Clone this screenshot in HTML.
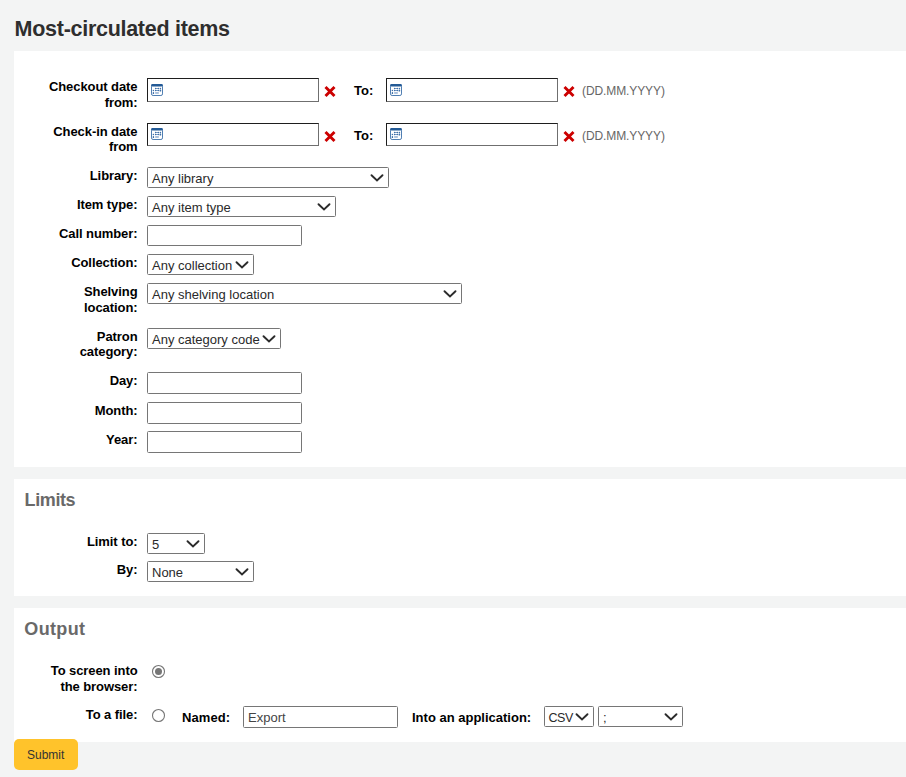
<!DOCTYPE html>
<html><head><meta charset="utf-8"><title>Most-circulated items</title>
<style>
html,body{margin:0;padding:0;}
body{width:906px;height:777px;background:#f3f4f4;position:relative;overflow:hidden;font-family:"Liberation Sans", sans-serif;}
.t{position:absolute;white-space:nowrap;}
.lb{position:absolute;left:0;text-align:right;font-size:13px;font-weight:bold;color:#000;letter-spacing:-0.08px;white-space:nowrap;}
.pan{position:absolute;background:#fff;}
.sel,.tin,.din{position:absolute;box-sizing:border-box;background:#fff;}
.sel,.tin{border:1px solid #767676;border-radius:1.5px;}
.din{border:1px solid;border-color:#1e1e1e #6f6f6f #6f6f6f #1e1e1e;}
.sv{position:absolute;overflow:visible;}
.btn{position:absolute;background:#ffc32b;border-radius:5px;}
</style></head><body>
<div class="pan" style="left:14px;top:51px;width:892px;height:416px;"></div>
<div class="pan" style="left:14px;top:479px;width:892px;height:117px;"></div>
<div class="pan" style="left:14px;top:608px;width:892px;height:134px;"></div>
<div class="t" style="left:14.6px;top:16.4px;font-size:21.5px;font-weight:bold;color:#2e2e2e;line-height:26px;letter-spacing:-0.28px;">Most-circulated items</div>
<div class="lb" style="top:79px;width:137.5px;line-height:16px">Checkout date<br>from:</div>
<div class="din" style="left:147px;top:78px;width:172px;height:24px;"></div>
<svg class="sv" style="left:151px;top:84px" width="12" height="12" viewBox="0 0 12 12">
<rect x="0.5" y="0.6" width="11" height="10.9" rx="1.6" fill="#fff" stroke="#4677ae" stroke-width="0.95"/>
<rect x="0.1" y="0.1" width="11.8" height="2.3" rx="1.3" fill="#235a96"/>
<g fill="#7d9dc6"><rect x="4.6" y="4.1" width="2.8" height="0.9"/><rect x="4.6" y="6" width="2.8" height="0.9"/><rect x="4.2" y="8" width="3.6" height="1.9" fill="#a9bfdb"/></g>
<g fill="#3f70a8"><circle cx="4.6" cy="4.5" r="0.75"/><circle cx="7.4" cy="4.5" r="0.75"/><circle cx="9.4" cy="4.5" r="0.8"/>
<circle cx="2.4" cy="6.4" r="0.75"/><circle cx="4.6" cy="6.4" r="0.75"/><circle cx="7.4" cy="6.4" r="0.75"/><rect x="8.6" y="5.6" width="1.6" height="2.0" rx="0.7"/>
<rect x="1.7" y="8.1" width="1.4" height="2.0" rx="0.6"/></g>
</svg>
<svg class="sv" style="left:324px;top:85px" width="12" height="12" viewBox="0 0 12 12"><path d="M1.5,2 L10.5,11 M10.5,2 L1.5,11" stroke="#cc0000" stroke-width="2.9" stroke-linecap="butt"/></svg>
<div class="t" style="left:354px;top:83px;font-size:13px;font-weight:bold;color:#000;line-height:16px;letter-spacing:0px;">To:</div>
<div class="din" style="left:386px;top:78px;width:172px;height:24px;"></div>
<svg class="sv" style="left:390px;top:84px" width="12" height="12" viewBox="0 0 12 12">
<rect x="0.5" y="0.6" width="11" height="10.9" rx="1.6" fill="#fff" stroke="#4677ae" stroke-width="0.95"/>
<rect x="0.1" y="0.1" width="11.8" height="2.3" rx="1.3" fill="#235a96"/>
<g fill="#7d9dc6"><rect x="4.6" y="4.1" width="2.8" height="0.9"/><rect x="4.6" y="6" width="2.8" height="0.9"/><rect x="4.2" y="8" width="3.6" height="1.9" fill="#a9bfdb"/></g>
<g fill="#3f70a8"><circle cx="4.6" cy="4.5" r="0.75"/><circle cx="7.4" cy="4.5" r="0.75"/><circle cx="9.4" cy="4.5" r="0.8"/>
<circle cx="2.4" cy="6.4" r="0.75"/><circle cx="4.6" cy="6.4" r="0.75"/><circle cx="7.4" cy="6.4" r="0.75"/><rect x="8.6" y="5.6" width="1.6" height="2.0" rx="0.7"/>
<rect x="1.7" y="8.1" width="1.4" height="2.0" rx="0.6"/></g>
</svg>
<svg class="sv" style="left:563px;top:85px" width="12" height="12" viewBox="0 0 12 12"><path d="M1.5,2 L10.5,11 M10.5,2 L1.5,11" stroke="#cc0000" stroke-width="2.9" stroke-linecap="butt"/></svg>
<div class="t" style="left:582px;top:84px;font-size:12px;font-weight:normal;color:#666;line-height:15px;letter-spacing:-0.1px;">(DD.MM.YYYY)</div>
<div class="lb" style="top:124px;width:137.5px;line-height:15px">Check-in date<br>from</div>
<div class="din" style="left:147px;top:123px;width:172px;height:23px;"></div>
<svg class="sv" style="left:151px;top:128px" width="12" height="12" viewBox="0 0 12 12">
<rect x="0.5" y="0.6" width="11" height="10.9" rx="1.6" fill="#fff" stroke="#4677ae" stroke-width="0.95"/>
<rect x="0.1" y="0.1" width="11.8" height="2.3" rx="1.3" fill="#235a96"/>
<g fill="#7d9dc6"><rect x="4.6" y="4.1" width="2.8" height="0.9"/><rect x="4.6" y="6" width="2.8" height="0.9"/><rect x="4.2" y="8" width="3.6" height="1.9" fill="#a9bfdb"/></g>
<g fill="#3f70a8"><circle cx="4.6" cy="4.5" r="0.75"/><circle cx="7.4" cy="4.5" r="0.75"/><circle cx="9.4" cy="4.5" r="0.8"/>
<circle cx="2.4" cy="6.4" r="0.75"/><circle cx="4.6" cy="6.4" r="0.75"/><circle cx="7.4" cy="6.4" r="0.75"/><rect x="8.6" y="5.6" width="1.6" height="2.0" rx="0.7"/>
<rect x="1.7" y="8.1" width="1.4" height="2.0" rx="0.6"/></g>
</svg>
<svg class="sv" style="left:324px;top:130px" width="12" height="12" viewBox="0 0 12 12"><path d="M1.5,2 L10.5,11 M10.5,2 L1.5,11" stroke="#cc0000" stroke-width="2.9" stroke-linecap="butt"/></svg>
<div class="t" style="left:354px;top:128px;font-size:13px;font-weight:bold;color:#000;line-height:16px;letter-spacing:0px;">To:</div>
<div class="din" style="left:386px;top:123px;width:172px;height:23px;"></div>
<svg class="sv" style="left:390px;top:128px" width="12" height="12" viewBox="0 0 12 12">
<rect x="0.5" y="0.6" width="11" height="10.9" rx="1.6" fill="#fff" stroke="#4677ae" stroke-width="0.95"/>
<rect x="0.1" y="0.1" width="11.8" height="2.3" rx="1.3" fill="#235a96"/>
<g fill="#7d9dc6"><rect x="4.6" y="4.1" width="2.8" height="0.9"/><rect x="4.6" y="6" width="2.8" height="0.9"/><rect x="4.2" y="8" width="3.6" height="1.9" fill="#a9bfdb"/></g>
<g fill="#3f70a8"><circle cx="4.6" cy="4.5" r="0.75"/><circle cx="7.4" cy="4.5" r="0.75"/><circle cx="9.4" cy="4.5" r="0.8"/>
<circle cx="2.4" cy="6.4" r="0.75"/><circle cx="4.6" cy="6.4" r="0.75"/><circle cx="7.4" cy="6.4" r="0.75"/><rect x="8.6" y="5.6" width="1.6" height="2.0" rx="0.7"/>
<rect x="1.7" y="8.1" width="1.4" height="2.0" rx="0.6"/></g>
</svg>
<svg class="sv" style="left:563px;top:130px" width="12" height="12" viewBox="0 0 12 12"><path d="M1.5,2 L10.5,11 M10.5,2 L1.5,11" stroke="#cc0000" stroke-width="2.9" stroke-linecap="butt"/></svg>
<div class="t" style="left:582px;top:129px;font-size:12px;font-weight:normal;color:#666;line-height:15px;letter-spacing:-0.1px;">(DD.MM.YYYY)</div>
<div class="lb" style="top:168px;width:137.5px;line-height:16px">Library:</div>
<div class="sel" style="left:147px;top:167px;width:242px;height:21px;"></div>
<div class="t" style="left:152px;top:171px;font-size:13px;font-weight:normal;color:#2a2a2a;line-height:16px;letter-spacing:0px;">Any library</div>
<svg class="sv" style="left:368px;top:167px" width="20" height="21"><polyline points="3.5,8.2 9,13.4 14.5,8.2" fill="none" stroke="#2b2b2b" stroke-width="1.9" stroke-linecap="round" stroke-linejoin="miter"/></svg>
<div class="lb" style="top:197px;width:137.5px;line-height:16px">Item type:</div>
<div class="sel" style="left:147px;top:196px;width:189px;height:21px;"></div>
<div class="t" style="left:152px;top:200px;font-size:13px;font-weight:normal;color:#2a2a2a;line-height:16px;letter-spacing:0px;">Any item type</div>
<svg class="sv" style="left:315px;top:196px" width="20" height="21"><polyline points="3.5,8.2 9,13.4 14.5,8.2" fill="none" stroke="#2b2b2b" stroke-width="1.9" stroke-linecap="round" stroke-linejoin="miter"/></svg>
<div class="lb" style="top:226px;width:137.5px;line-height:16px">Call number:</div>
<div class="tin" style="left:147px;top:225px;width:155px;height:21px;"></div>
<div class="lb" style="top:255px;width:137.5px;line-height:16px">Collection:</div>
<div class="sel" style="left:147px;top:254px;width:107px;height:21px;"></div>
<div class="t" style="left:152px;top:258px;font-size:13px;font-weight:normal;color:#2a2a2a;line-height:16px;letter-spacing:0px;">Any collection</div>
<svg class="sv" style="left:233px;top:254px" width="20" height="21"><polyline points="3.5,8.2 9,13.4 14.5,8.2" fill="none" stroke="#2b2b2b" stroke-width="1.9" stroke-linecap="round" stroke-linejoin="miter"/></svg>
<div class="lb" style="top:284px;width:137.5px;line-height:16px">Shelving<br>location:</div>
<div class="sel" style="left:147px;top:283px;width:315px;height:21px;"></div>
<div class="t" style="left:152px;top:287px;font-size:13px;font-weight:normal;color:#2a2a2a;line-height:16px;letter-spacing:0px;">Any shelving location</div>
<svg class="sv" style="left:441px;top:283px" width="20" height="21"><polyline points="3.5,8.2 9,13.4 14.5,8.2" fill="none" stroke="#2b2b2b" stroke-width="1.9" stroke-linecap="round" stroke-linejoin="miter"/></svg>
<div class="lb" style="top:329px;width:137.5px;line-height:15px">Patron<br>category:</div>
<div class="sel" style="left:147px;top:328px;width:134px;height:21px;"></div>
<div class="t" style="left:152px;top:332px;font-size:13px;font-weight:normal;color:#2a2a2a;line-height:16px;letter-spacing:0px;">Any category code</div>
<svg class="sv" style="left:260px;top:328px" width="20" height="21"><polyline points="3.5,8.2 9,13.4 14.5,8.2" fill="none" stroke="#2b2b2b" stroke-width="1.9" stroke-linecap="round" stroke-linejoin="miter"/></svg>
<div class="lb" style="top:373px;width:137.5px;line-height:16px">Day:</div>
<div class="tin" style="left:147px;top:372px;width:155px;height:22px;"></div>
<div class="lb" style="top:403px;width:137.5px;line-height:16px">Month:</div>
<div class="tin" style="left:147px;top:402px;width:155px;height:22px;"></div>
<div class="lb" style="top:432px;width:137.5px;line-height:16px">Year:</div>
<div class="tin" style="left:147px;top:431px;width:155px;height:22px;"></div>
<div class="t" style="left:24.6px;top:489px;font-size:18px;font-weight:bold;color:#696969;line-height:22px;letter-spacing:-0.4px;">Limits</div>
<div class="lb" style="top:534px;width:137.5px;line-height:16px">Limit to:</div>
<div class="sel" style="left:147px;top:533px;width:58px;height:21px;"></div>
<div class="t" style="left:152px;top:537px;font-size:13px;font-weight:normal;color:#2a2a2a;line-height:16px;letter-spacing:0px;">5</div>
<svg class="sv" style="left:184px;top:533px" width="20" height="21"><polyline points="3.5,8.2 9,13.4 14.5,8.2" fill="none" stroke="#2b2b2b" stroke-width="1.9" stroke-linecap="round" stroke-linejoin="miter"/></svg>
<div class="lb" style="top:562px;width:137.5px;line-height:16px">By:</div>
<div class="sel" style="left:147px;top:561px;width:107px;height:21px;"></div>
<div class="t" style="left:152px;top:565px;font-size:13px;font-weight:normal;color:#2a2a2a;line-height:16px;letter-spacing:0px;">None</div>
<svg class="sv" style="left:233px;top:561px" width="20" height="21"><polyline points="3.5,8.2 9,13.4 14.5,8.2" fill="none" stroke="#2b2b2b" stroke-width="1.9" stroke-linecap="round" stroke-linejoin="miter"/></svg>
<div class="t" style="left:24.3px;top:618px;font-size:18px;font-weight:bold;color:#696969;line-height:22px;letter-spacing:0.35px;">Output</div>
<div class="lb" style="top:663px;width:137.5px;line-height:16px">To screen into<br>the browser:</div>
<svg class="sv" style="left:151.0px;top:664.0px" width="15" height="15" viewBox="0 0 15 15"><circle cx="7.5" cy="7.5" r="6" fill="#fff" stroke="#767676" stroke-width="1.1"/><circle cx="7.5" cy="7.5" r="3.5" fill="#767676"/></svg>
<div class="lb" style="top:707px;width:137.5px;line-height:16px">To a file:</div>
<svg class="sv" style="left:151.0px;top:708.0px" width="15" height="15" viewBox="0 0 15 15"><circle cx="7.5" cy="7.5" r="6" fill="#fff" stroke="#767676" stroke-width="1.1"/></svg>
<div class="t" style="left:182px;top:710px;font-size:13px;font-weight:bold;color:#000;line-height:16px;letter-spacing:0.1px;">Named:</div>
<div class="tin" style="left:243px;top:706px;width:155px;height:22px;"></div>
<div class="t" style="left:248px;top:710px;font-size:13px;font-weight:normal;color:#444;line-height:16px;letter-spacing:0px;">Export</div>
<div class="t" style="left:412px;top:710px;font-size:13px;font-weight:bold;color:#000;line-height:16px;letter-spacing:0px;">Into an application:</div>
<div class="sel" style="left:544px;top:706px;width:50px;height:21px;"></div>
<div class="t" style="left:548.5px;top:710px;font-size:12.5px;font-weight:normal;color:#2a2a2a;line-height:16px;letter-spacing:-0.45px;">CSV</div>
<svg class="sv" style="left:573px;top:706px" width="20" height="21"><polyline points="3.5,8.2 9,13.4 14.5,8.2" fill="none" stroke="#2b2b2b" stroke-width="1.9" stroke-linecap="round" stroke-linejoin="miter"/></svg>
<div class="sel" style="left:598px;top:706px;width:85px;height:21px;"></div>
<div class="t" style="left:603px;top:710px;font-size:13px;font-weight:normal;color:#2a2a2a;line-height:16px;letter-spacing:0px;">;</div>
<svg class="sv" style="left:662px;top:706px" width="20" height="21"><polyline points="3.5,8.2 9,13.4 14.5,8.2" fill="none" stroke="#2b2b2b" stroke-width="1.9" stroke-linecap="round" stroke-linejoin="miter"/></svg>
<div class="btn" style="left:14px;top:739px;width:64px;height:31px"></div>
<div class="t" style="left:27px;top:748px;font-size:12px;font-weight:normal;color:#333;line-height:15px;letter-spacing:0px;">Submit</div>
</body></html>
